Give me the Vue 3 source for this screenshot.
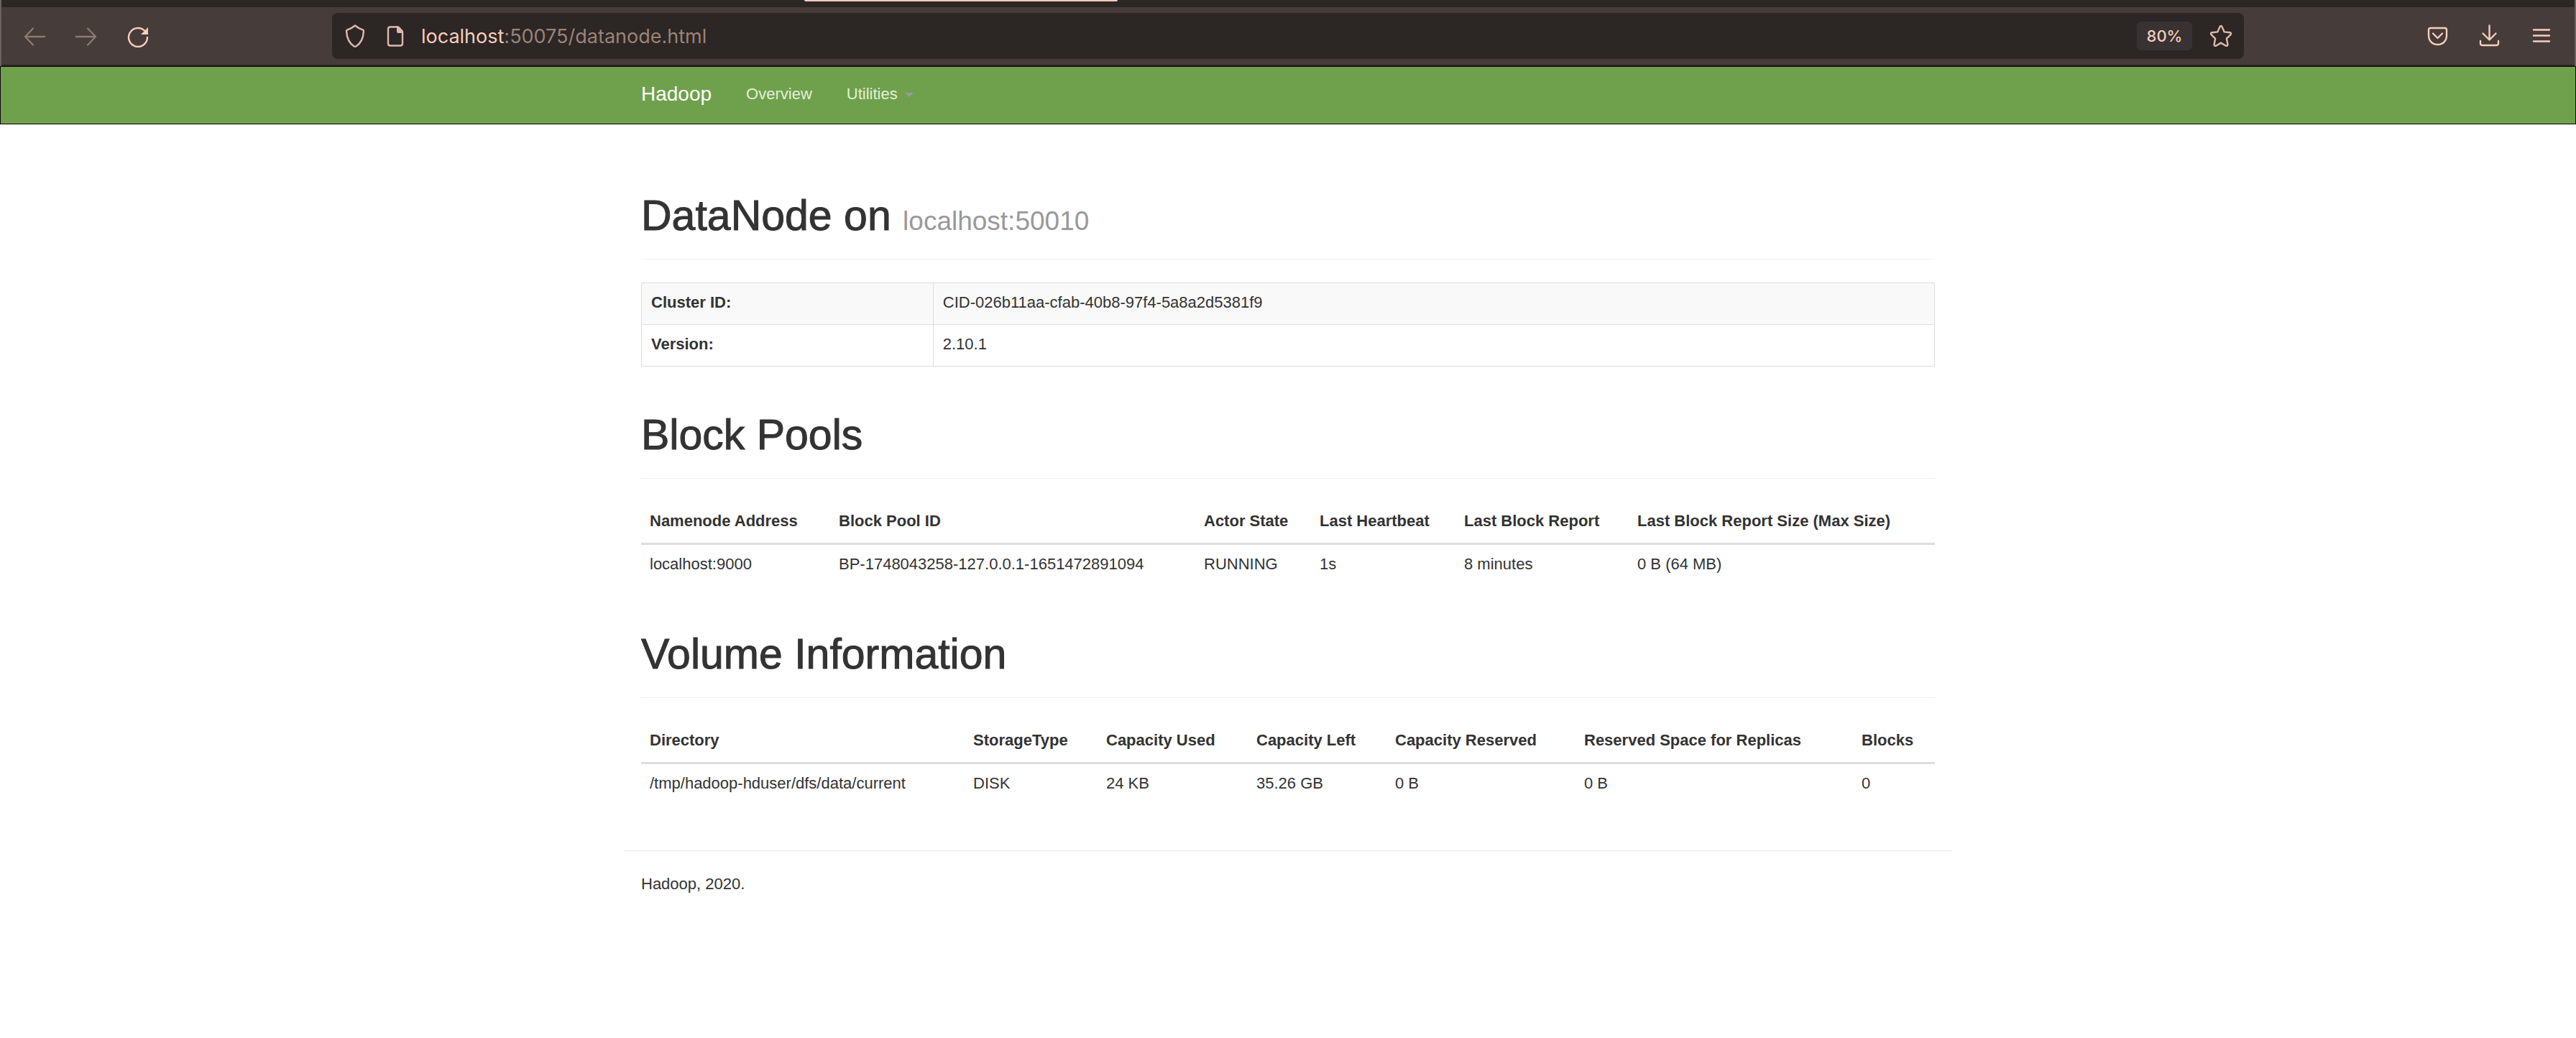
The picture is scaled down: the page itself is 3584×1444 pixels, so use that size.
<script setup>
const summary = [
  { label: 'Cluster ID:', value: 'CID-026b11aa-cfab-40b8-97f4-5a8a2d5381f9' },
  { label: 'Version:', value: '2.10.1' },
]

// share: column width in parts of 1800
const sections = [
  {
    title: 'Block Pools',
    columns: [
      { name: 'Namenode Address', share: 263 },
      { name: 'Block Pool ID', share: 508 },
      { name: 'Actor State', share: 161 },
      { name: 'Last Heartbeat', share: 201 },
      { name: 'Last Block Report', share: 241 },
      { name: 'Last Block Report Size (Max Size)', share: 426 },
    ],
    rows: [
      ['localhost:9000', 'BP-1748043258-127.0.0.1-1651472891094', 'RUNNING', '1s', '8 minutes', '0 B (64 MB)'],
    ],
  },
  {
    title: 'Volume Information',
    columns: [
      { name: 'Directory', share: 450 },
      { name: 'StorageType', share: 185 },
      { name: 'Capacity Used', share: 209 },
      { name: 'Capacity Left', share: 193 },
      { name: 'Capacity Reserved', share: 263 },
      { name: 'Reserved Space for Replicas', share: 386 },
      { name: 'Blocks', share: 114 },
    ],
    rows: [['/tmp/hadoop-hduser/dfs/data/current', 'DISK', '24 KB', '35.26 GB', '0 B', '0 B', '0']],
  },
]

const width = (share) => ({ width: (share / 1800) * 100 + '%' })
</script>

<template>
  <div class="window">
    <div class="chrome">
      <div class="tabs"><div class="active-tab"></div></div>
      <div class="toolbar">
        <div class="history">
          <button class="icon dim" aria-label="Back">
            <svg viewBox="0 0 32 32"><path d="M30 17H3.500M14 5.500L3 17l11 11.500" /></svg>
          </button>
          <button class="icon dim" aria-label="Forward">
            <svg viewBox="0 0 32 32"><path d="M2 17h26.500M18 5.500L29 17 18 28.500" /></svg>
          </button>
          <button class="icon" aria-label="Reload">
            <svg viewBox="0 0 32 32">
              <path d="M29 18a13 13 0 1 1-4-9.400" />
              <path class="solid" d="M30 4v10H20z" />
            </svg>
          </button>
        </div>
        <div class="address">
          <button class="icon soft" aria-label="Tracking protection">
            <svg viewBox="0 0 32 32">
              <path d="M16 1.500c3.500 3 7.500 5 11 6.200q1 .3 1 1.400C27.500 19 24.500 26 17.300 30.500q-1.300.7-2.600 0C7.500 26 4.500 19 4 9.100q0-1.100 1-1.400C8.500 6.500 12.500 4.500 16 1.500z" />
            </svg>
          </button>
          <button class="icon soft" aria-label="Site information">
            <svg viewBox="0 0 32 32">
              <path d="M19 3.500H9Q6 3.500 6 6.500v20q0 3 3 3h14q3 0 3-3V11" />
              <path class="solid" d="M18 2.500h3l6 6.500v3H20q-2 0-2-2z" />
            </svg>
          </button>
          <a class="url" href="#"><span class="host">localhost</span>:50075/datanode.html</a>
          <button class="zoom">80%</button>
          <button class="icon soft" aria-label="Bookmark this page">
            <svg viewBox="0 0 32 32">
              <path d="M14.500 3.200q1.500-2.400 3 0L20.700 10.400l7.900.8q2.400.7.900 2.900l-5.600 5.600 1.500 8.100q.1 2.700-2.500 1.900L16 25.600l-6.900 4.100q-2.600.8-2.500-1.900l1.500-8.100-5.600-5.600q-1.500-2.200.9-2.900l7.900-.8z" />
            </svg>
          </button>
        </div>
        <div class="actions">
          <button class="icon" aria-label="Save to Pocket">
            <svg viewBox="0 0 32 32">
              <path d="M5.500 5h20q2.500 0 2.500 2.500v8c0 7.500-5.500 12.500-12.500 12.500S3 23 3 15.500v-8Q3 5 5.500 5z" />
              <path d="M9 12.500l6.500 6.500 6.500-6.500" />
            </svg>
          </button>
          <button class="icon" aria-label="Downloads">
            <svg viewBox="0 0 32 32">
              <path d="M15.500 1.500V21M6.500 12.500l9 9 9-9M3 23v3.500Q3 29 6 29h19q3 0 3-2.500V23" />
            </svg>
          </button>
          <button class="icon" aria-label="Menu">
            <svg viewBox="0 0 32 32"><path d="M5 7.500h22M5 15.500h22M5 23.500h22" /></svg>
          </button>
        </div>
      </div>
    </div>

    <nav class="navbar">
      <div class="container links">
        <a class="brand" href="#">Hadoop</a>
        <a href="#">Overview</a>
        <a href="#">Utilities<span class="caret"></span></a>
      </div>
    </nav>

    <main class="container">
      <section>
        <h1>DataNode on <small>localhost:50010</small></h1>
        <table class="summary">
          <colgroup><col :style="width(406)" /><col /></colgroup>
          <tbody>
            <tr v-for="item in summary" :key="item.label">
              <th scope="row">{{ item.label }}</th>
              <td>{{ item.value }}</td>
            </tr>
          </tbody>
        </table>
      </section>

      <section v-for="section in sections" :key="section.title">
        <h1>{{ section.title }}</h1>
        <table class="listing">
          <colgroup>
            <col v-for="c in section.columns" :key="c.name" :style="width(c.share)" />
          </colgroup>
          <thead>
            <tr>
              <th v-for="c in section.columns" :key="c.name" scope="col">{{ c.name }}</th>
            </tr>
          </thead>
          <tbody>
            <tr v-for="(row, r) in section.rows" :key="r">
              <td v-for="(cell, i) in row" :key="i">{{ cell }}</td>
            </tr>
          </tbody>
        </table>
      </section>
    </main>

    <footer class="container">Hadoop, 2020.</footer>
  </div>
</template>

<style>
body {
  margin: 0;
  background: #fff;
}
</style>

<style scoped>
.window {
  color: #333;
  font: 22px/32px 'Liberation Sans', Arial, sans-serif;
}
button {
  padding: 0;
  border: 0;
  background: none;
  color: inherit;
  font: inherit;
}
a {
  color: inherit;
  text-decoration: none;
}

.chrome {
  border: 2px solid #6a6361;
  border-width: 0 2px;
  background: #463c39;
  color: #f6cdbd;
  font-family: Inter, sans-serif;
}
.tabs {
  height: 10px;
  background: #2c2624;
}
.active-tab {
  width: 436px;
  height: 2px;
  margin-left: 1117px;
  border-radius: 0 0 4px 4px;
  background: #f6cdbd;
}
.toolbar {
  display: grid;
  grid-template-columns: 460px 1fr 460px;
  align-items: center;
  height: 80px;
  border-bottom: 2px solid #2b2725;
}
.history,
.actions,
.address {
  display: flex;
  align-items: center;
}
.history {
  gap: 40px;
  padding-left: 30px;
}
.actions {
  gap: 40px;
  justify-content: flex-end;
  padding-right: 30px;
}
.icon {
  flex: none;
  width: 32px;
  height: 32px;
}
.icon svg {
  display: block;
  fill: none;
  stroke: currentColor;
  stroke-width: 2.4;
  stroke-linecap: round;
  stroke-linejoin: round;
}
.icon .solid {
  fill: currentColor;
  stroke: none;
}
.dim {
  color: #8d796f;
}
.soft {
  color: #dfbaac;
}
.address {
  gap: 24px;
  box-sizing: border-box;
  height: 64px;
  padding: 0 16px;
  border-radius: 8px;
  background: #2c2624;
}
.url {
  flex: 1;
  margin-left: -4px;
  padding-top: 2px;
  color: #9a8379;
  font-size: 27px;
}
.host {
  color: #f6cdbd;
}
.zoom {
  width: 77px;
  height: 40px;
  border-radius: 6px;
  background: #383332;
  font-weight: 500;
}

.container {
  box-sizing: border-box;
  max-width: 1848px;
  margin: 0 auto;
  padding: 0 24px;
}
.navbar {
  border: 1px solid #080808;
  background: #6fa14c;
  color: #e2f0d9;
}
.links {
  display: flex;
  align-items: center;
  gap: 48px;
  height: 79px;
  padding-bottom: 4px;
}
.brand {
  color: #fff;
  font-size: 28px;
}
.caret {
  display: inline-block;
  margin-left: 10px;
  border: 6px solid transparent;
  border-top-color: #999;
  border-bottom: 0;
  vertical-align: middle;
}

main.container {
  padding-top: 95px;
}
section {
  margin-bottom: 63px;
}
h1 {
  margin: 0 0 32px;
  padding-bottom: 28px;
  border-bottom: 1px solid #eee;
  font-size: 59px;
  font-weight: 500;
  line-height: 64px;
  -webkit-text-stroke: 1px;
}
small {
  color: #999;
  font-size: 37px;
  font-weight: 400;
  line-height: 1;
  -webkit-text-stroke: 0;
}
table {
  width: 100%;
  border-collapse: collapse;
  table-layout: fixed;
}
th,
td {
  padding: 11px 13px 14px;
  text-align: left;
}
.summary th,
.summary td {
  border: 1px solid #ddd;
}
.summary tr:first-child {
  background: #f9f9f9;
}
.listing {
  border-spacing: 0;
  border-collapse: separate;
}
.listing th,
.listing td {
  padding-left: 12px;
}
.listing thead th {
  border-bottom: 3px solid #ddd;
}
footer.container {
  padding-top: 30px;
  padding-bottom: 30px;
  border-top: 1px solid #eee;
}
</style>
